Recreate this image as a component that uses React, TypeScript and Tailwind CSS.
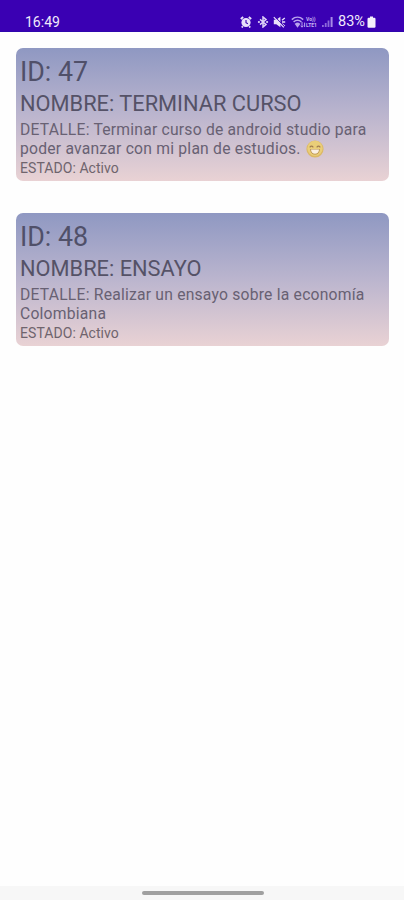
interface Task {
  id: number;
  name: string;
  detail: string;
  status: string;
  happy?: boolean;
}

const tasks: Task[] = [
  {
    id: 47,
    name: "TERMINAR CURSO",
    detail: "Terminar curso de android studio para poder avanzar con mi plan de estudios.",
    status: "Activo",
    happy: true,
  },
  {
    id: 48,
    name: "ENSAYO",
    detail: "Realizar un ensayo sobre la economía Colombiana",
    status: "Activo",
  },
];

function AlarmIcon() {
  return (
    <svg className="h-3 w-3" viewBox="0 0 12 12" fill="none" stroke="#e9e0fa">
      <circle cx="6" cy="6.5" r="4.6" fill="#e9e0fa" stroke="none" />
      <path d="M0.8 3 3.2 1M11.2 3 8.8 1M2.8 10.2 1.8 11.5M9.2 10.2l1 1.3" strokeWidth="1.8" />
      <path d="M6 4v2.7l1.9 1" stroke="#3a00b0" strokeWidth="1.1" />
    </svg>
  );
}

function BluetoothIcon() {
  return (
    <svg className="h-3 w-3" viewBox="0 0 12 12" fill="none" stroke="#ddd0f7" strokeWidth="1.5">
      <path d="m3 3.4 6 5L6 11V1l3 2.6-6 5" />
      <circle cx="1.9" cy="6" r="1.1" fill="#ddd0f7" stroke="none" />
      <circle cx="10.1" cy="6" r="1.1" fill="#ddd0f7" stroke="none" />
    </svg>
  );
}

function MuteIcon() {
  return (
    <svg className="h-3 w-[13px]" viewBox="0 0 13 12" fill="none" stroke="#e9e0fa" strokeWidth="1.4">
      <path d="M0.8 3.8h2.5L7.4 0.8v10.4L3.3 8.2H0.8z" fill="#e9e0fa" stroke="none" />
      <path d="M9 4.2 11.8 2M9 6h3.2M9 7.8l2.8 2.4" />
      <path d="m2.2 1 9.6 9.8" stroke="#3a00b0" strokeWidth="1" />
      <path d="m0.8 1.2 10 10.2" strokeWidth="1.2" />
    </svg>
  );
}

function WifiIcon() {
  return (
    <svg className="h-3 w-[15px]" viewBox="0 0 15 12" fill="none" stroke="#b9a2ed" strokeWidth="1.5">
      <path d="M0.8 3.6c3.4-3 8-3 11.4 0M2.6 5.8c2.4-2 5.4-2 7.8 0M4.5 8c1.3-1 2.7-1 4 0" />
      <path d="m5 8.4 1.5 2 1.5-2z" fill="#b9a2ed" />
      <path d="M11 6v5M9.6 9.7 11 11.2l1.4-1.5M13.6 11V6.6" strokeWidth="1" />
    </svg>
  );
}

function SignalIcon() {
  return (
    <svg className="h-3 w-[11px]" viewBox="0 0 11 12" fill="#8d6adb">
      <path d="M0 9h1.8v2H0zM2.8 7h1.8v4H2.8zM5.6 4.5h1.8V11H5.6z" />
      <path d="M8.6 1h2v10h-2z" fill="#a78ae6" />
    </svg>
  );
}

function BatteryIcon() {
  return (
    <svg className="h-3 w-[9px]" viewBox="0 0 9 12" fill="#f4effc">
      <path d="M3 0.5h3v1.5H3z" />
      <rect x="0.5" y="1.7" width="8" height="10" rx="1.2" />
    </svg>
  );
}

function StatusBar() {
  return (
    <header className="flex h-8 items-end justify-between border-b border-[#2f06ad] bg-[#3a00b3] pr-7 pl-[25px] text-[#f0eafb]">
      <span className="h-[18px] text-[14px] leading-[18px]">16:49</span>
      <div className="flex h-[18px] items-center">
        <AlarmIcon />
        <span className="ml-[5px] flex"><BluetoothIcon /></span>
        <span className="ml-1 flex"><MuteIcon /></span>
        <span className="ml-[5px] flex"><WifiIcon /></span>
        <span className="flex w-[14px] flex-col text-[5px] leading-[6px] font-bold text-[#c9b6f2]">
          <span>Vo))</span>
          <span>LTE1</span>
        </span>
        <span className="ml-[2px] flex"><SignalIcon /></span>
        <span className="ml-[5px] w-[28px] text-[14.5px] leading-[18px]">83%</span>
        <span className="ml-[1px] flex"><BatteryIcon /></span>
      </div>
    </header>
  );
}

function GrinEmoji() {
  return (
    <svg className="ml-[5px] inline-block h-[18px] w-[18px] align-[-4px]" viewBox="0 0 18 18">
      <circle cx="9" cy="9" r="8.6" fill="#dcb866" />
      <circle cx="9" cy="8.4" r="7.6" fill="#eace78" />
      <path d="M3.7 7.4q1.8-2.5 3.6 0M10.7 7.4q1.8-2.5 3.6 0" fill="none" stroke="#a17c50" strokeWidth="1.1" />
      <path d="M4.2 9h9.6c0 3.4-2 5.6-4.8 5.6S4.2 12.400 4.200 9z" fill="#b8904f" />
      <path d="M5 9.400h8c0 2.800-1.800 4.300-4 4.300s-4-1.500-4-4.300z" fill="#fbf0e2" />
    </svg>
  );
}

function TaskCard({ task }: { task: Task }) {
  return (
    <article className="h-[133px] rounded-[7px] bg-linear-to-b from-[#8f98c2] via-[#bbb5ce] to-[#e9d2d4] px-1 pt-2 text-[#686173]">
      <h2 className="text-[26.8px] leading-8 text-[#505069]">ID: {task.id}</h2>
      <h3 className="mt-[3px] text-[21.8px] leading-[26px] text-[#555267]">NOMBRE: {task.name}</h3>
      <p className="mt-1 text-[15.7px] leading-[18.5px] tracking-[0.21px]">
        DETALLE: {task.detail}
        {task.happy && <GrinEmoji />}
      </p>
      <p className="mt-[2px] text-[14px] leading-4 tracking-[0.06px] text-[#6f646d]">ESTADO: {task.status}</p>
    </article>
  );
}

export default function App() {
  return (
    <div className="flex h-[900px] w-[404px] flex-col bg-[#fefefe] font-[Roboto,sans-serif]">
      <StatusBar />
      <main className="flex flex-1 flex-col gap-8 pt-4 pr-[15px] pl-4">
        {tasks.map((task) => (
          <TaskCard key={task.id} task={task} />
        ))}
      </main>
      <nav className="flex h-[14px] justify-center bg-[#f7f7f7] pt-[5px]">
        <div className="h-1 w-[122px] translate-x-px rounded-full bg-[#a0a0a0]"></div>
      </nav>
    </div>
  );
}
